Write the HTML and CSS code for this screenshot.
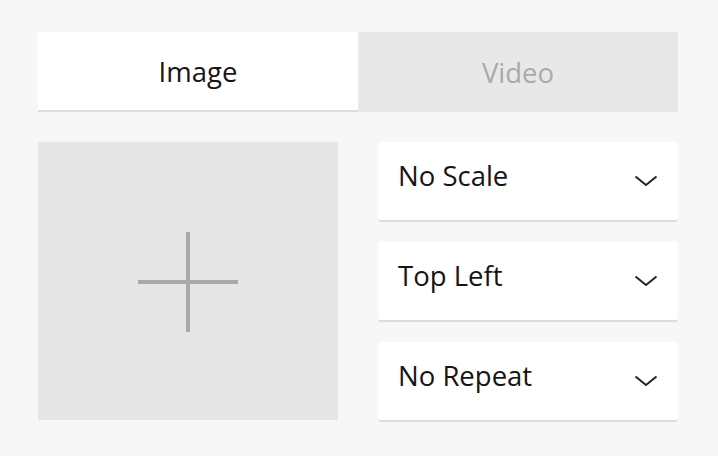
FILE: index.html
```html
<!DOCTYPE html>
<html>
<head>
<meta charset="utf-8">
<link rel="stylesheet" href="styles.css">
</head>
<body>
<div class="panel">
  <div class="tabs">
    <div class="tab active">Image</div>
    <div class="tab">Video</div>
  </div>
  <div class="content">
    <div class="drop-area">
      <svg class="plus" width="100" height="100" viewBox="0 0 100 100">
        <rect x="48" y="0" width="4" height="100" fill="#aaaaaa"/>
        <rect x="0" y="48" width="100" height="4" fill="#aaaaaa"/>
      </svg>
    </div>
    <div class="selects">
      <div class="select"><span class="label">No Scale</span><svg class="chev" width="24" height="14" viewBox="0 0 24 14"><path d="M1.5 2.5 L12 11 L22.5 2.5" fill="none" stroke="#222" stroke-width="2"/></svg></div>
      <div class="select"><span class="label">Top Left</span><svg class="chev" width="24" height="14" viewBox="0 0 24 14"><path d="M1.5 2.5 L12 11 L22.5 2.5" fill="none" stroke="#222" stroke-width="2"/></svg></div>
      <div class="select"><span class="label">No Repeat</span><svg class="chev" width="24" height="14" viewBox="0 0 24 14"><path d="M1.5 2.5 L12 11 L22.5 2.5" fill="none" stroke="#222" stroke-width="2"/></svg></div>
    </div>
  </div>
</div>
</body>
</html>
```
FILE: styles.css
```css
html, body {
  margin: 0;
  padding: 0;
  background: #f7f7f7;
  font-family: "Open Sans", "Liberation Sans", sans-serif;
}
.panel {
  padding: 32px 40px 0 38px;
  width: 640px;
}
.tabs {
  display: flex;
  height: 80px;
}
.tab {
  flex: 1;
  display: flex;
  align-items: center;
  justify-content: center;
  font-size: 27.5px;
  color: #aaaaaa;
  background: #e8e8e8;
  box-sizing: border-box;
}
.tab.active {
  background: #ffffff;
  color: #151515;
  border-bottom: 2px solid #dddddd;
  height: 80px;
}
.content {
  display: grid;
  grid-template-columns: 300px 300px;
  column-gap: 40px;
  margin-top: 30px;
}
.drop-area {
  height: 278px;
  background: #e6e6e6;
  display: flex;
  align-items: center;
  justify-content: center;
}
.plus {
  margin-top: 2px;
}
.selects {
  display: flex;
  flex-direction: column;
  gap: 20px;
}
.select {
  height: 78px;
  background: #ffffff;
  border-radius: 3px;
  border-bottom: 2px solid #dddddd;
  display: flex;
  align-items: center;
  justify-content: space-between;
  padding: 0 20px 0 20px;
}
.label {
  font-size: 27.5px;
  color: #151515;
  margin-top: -11px;
}
.chev {
  display: block;
}
```
